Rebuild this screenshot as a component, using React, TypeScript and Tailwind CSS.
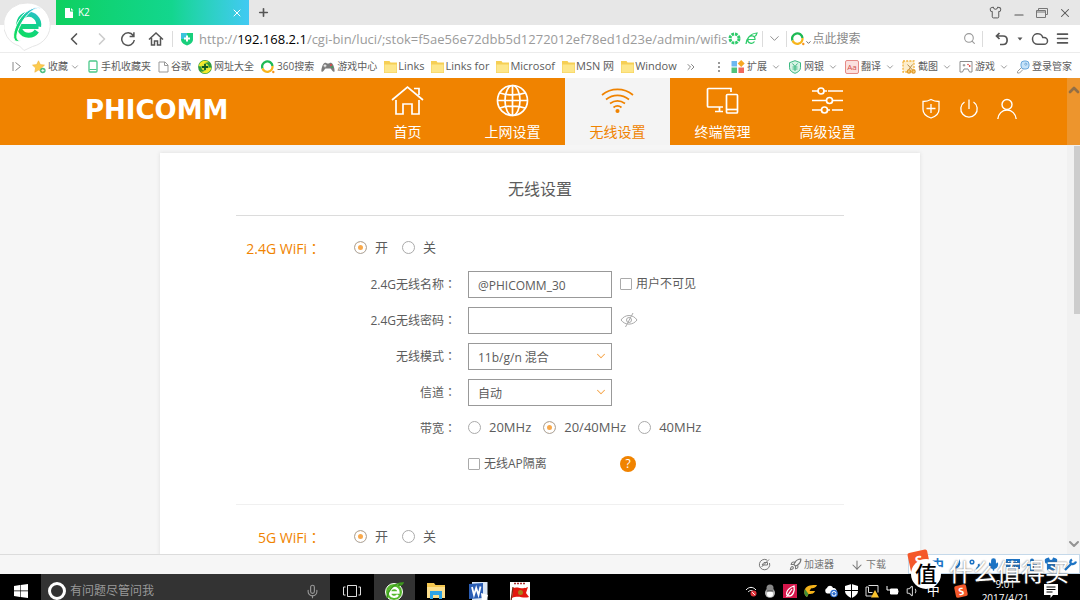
import { useState, type ReactNode } from "react";
import {
  ArrowDown,
  ChevronDown,
  ChevronLeft,
  ChevronRight,
  ChevronsRight,
  ChevronUp,
  Cloud,
  Menu,
  Mic,
  Minus,
  Plus,
  Rocket,
  Search,
  Shirt,
  Volume1,
  X,
} from "lucide-react";

export default function App() {
  return (
    <div className="h-screen flex flex-col overflow-hidden bg-white font-['Open_Sans','Noto_Sans_CJK_SC',sans-serif] text-[#5c5c5c]">
      <BrowserChrome />
      <main className="relative flex-1 min-h-0 overflow-hidden bg-[#f6f6f6]">
        <RouterHeader />
        <WifiCard />
        <ScrollBar />
      </main>
      <StatusBar />
      <Taskbar />
    </div>
  );
}

/* ---------- browser ---------- */

function BrowserChrome() {
  return (
    <div className="relative shrink-0">
      <TabStrip />
      <AddressBar />
      <BookmarkBar />
      <div className="absolute left-1 top-0.5">
        <BrowserLogo />
      </div>
    </div>
  );
}

function BrowserLogo() {
  return (
    <svg width="47" height="49" viewBox="0 0 47 49" fill="none">
      <defs>
        <linearGradient id="logo" gradientUnits="userSpaceOnUse" x1="34" y1="5" x2="20" y2="36">
          <stop offset="0" stopColor="#3fb5ee" />
          <stop offset="0.45" stopColor="#12cf96" />
          <stop offset="1" stopColor="#10dc60" />
        </linearGradient>
      </defs>
      <path
        d="M23.500 1a22.500 22 0 0 1 5 43.500L20 48.500 15.500 44A22.500 22 0 0 1 23.500 1z"
        fill="#fff"
        stroke="#e6e6e6"
      />
      <path
        d="M34.500 24.500H16M34.600 24.500a10 10.500 0 1 0-1.800 4.500"
        stroke="url(#logo)"
        strokeWidth="5"
      />
      <path
        d="M37 7c-3-3-11-1-17 5C12 20 7.500 33 10.500 38c1 1.600 3.500 1.800 6 .8-4 0-4.500-4-2.500-10C17 20 24 10 31 7c2-.8 4-.8 6 0z"
        fill="url(#logo)"
        stroke="#fff"
        strokeWidth="1"
      />
    </svg>
  );
}

function TabStrip() {
  return (
    <div className="h-[25px] flex items-stretch bg-[#e7e7e7] pl-14 pr-2 text-[#555]">
      <div className="w-[193px] flex items-center pl-2 pr-1.5 text-white text-[10px] bg-linear-to-r from-[#0fd05f] via-[#13d68e] via-60% to-[#42c9f3]">
        <svg width="10" height="12" viewBox="0 0 10 12" fill="#fff">
          <path d="M1 1h5v3.500h3V11H1z" />
          <path d="M7 1l2.500 2.500H7z" />
        </svg>
        <span className="ml-1 flex-1">K2</span>
        <button aria-label="关闭标签">
          <X size={12} strokeWidth={2} />
        </button>
      </div>
      <button aria-label="新标签" className="ml-2">
        <Plus size={13} strokeWidth={3} />
      </button>
      <div className="ml-auto flex items-center gap-2.5">
        <button aria-label="皮肤">
          <Shirt size={13} strokeWidth={1.8} />
        </button>
        <button aria-label="最小化" className="pt-1">
          <Minus size={14} strokeWidth={1.8} />
        </button>
        <button aria-label="还原">
          <svg width="12" height="12" viewBox="0 0 12 12" fill="none" stroke="#777">
            <path d="M2.500 3.500v-2h9v6h-2M.5 3.500h9v7h-9zM.5 5h9" />
          </svg>
        </button>
        <button aria-label="关闭">
          <X size={14} strokeWidth={1.8} />
        </button>
      </div>
    </div>
  );
}

function Divider() {
  return <i className="w-px h-4 bg-[#dcdcdc]" />;
}

function AddressBar() {
  return (
    <div className="h-7 flex items-center pl-16 pr-2.5 border-b border-[#ececec] bg-white text-[#555]">
      <div className="flex items-center gap-2">
        <button aria-label="后退">
          <ChevronLeft size={20} strokeWidth={2} />
        </button>
        <button aria-label="前进" className="text-[#ccc]">
          <ChevronRight size={20} strokeWidth={2} />
        </button>
        <button aria-label="刷新">
          <svg width="16" height="16" viewBox="0 0 16 16" fill="none" stroke="currentColor" strokeWidth="1.500">
            <path d="M13.200 4.500A6.300 6.300 0 1 0 14.300 9M13.900 1.200v4.300H9.600" />
          </svg>
        </button>
        <button aria-label="主页" className="ml-1">
          <svg width="16" height="16" viewBox="0 0 16 16" fill="none" stroke="currentColor" strokeWidth="1.500">
            <path d="M1 8.500L8 2l7 6.500M3.500 7v7h3v-4h3v4h3V7" />
          </svg>
        </button>
        <Divider />
      </div>
      <svg className="ml-2 shrink-0" width="12" height="14" viewBox="0 0 12 14">
        <path d="M0 1h12v6.500c0 3-3 5-6 6-3-1-6-3-6-6z" fill="#19cf7c" />
        <path d="M0 1h6v6H0z" fill="#3bc4dc" />
        <path d="M6 3.500v6M3 6.500h6" stroke="#fff" strokeWidth="2" />
      </svg>
      <div className="ml-1.5 shrink-0 whitespace-nowrap text-[13px] leading-5 text-[#9b9b9b]">
        http://<span className="text-black">192.168.2.1</span>
        /cgi-bin/luci/;stok=f5ae56e72dbb5d1272012ef78ed1d23e/admin/wifis
      </div>
      <div className="ml-px flex items-center gap-1">
        <svg width="13" height="13" viewBox="0 0 13 13" fill="none" stroke="#2fcb6b">
          <circle cx="6.500" cy="6.500" r="4.500" strokeWidth="3" strokeDasharray="2.600 0.930" />
        </svg>
        <svg width="13" height="13" viewBox="0 0 13 13" fill="none" stroke="#2fcb6b" strokeWidth="1.200">
          <path d="M2.500 7.500h7.500c.5-5-6.500-4.500-7.200 0-.5 4 5 5 6.700 2M1 12C1 7 5 1.500 12 1c-.5 2-1 3-2.500 3.500" />
        </svg>
        <Divider />
        <button aria-label="展开地址">
          <ChevronDown size={15} strokeWidth={1.500} className="text-[#888]" />
        </button>
        <Divider />
      </div>
      <label className="ml-1 flex-1 min-w-0 flex items-center">
        <RingIcon />
        <ChevronDown size={7} strokeWidth={3} className="mt-2 shrink-0" />
        <input
          aria-label="搜索"
          placeholder="点此搜索"
          className="flex-1 min-w-0 text-xs outline-none placeholder:text-[#888]"
        />
      </label>
      <div className="flex items-center">
        <button aria-label="搜索按钮" className="mr-1.5 text-[#999]">
          <Search size={13} strokeWidth={2} />
        </button>
        <Divider />
        <button aria-label="恢复" className="ml-3">
          <svg width="14" height="14" viewBox="0 0 14 14" fill="none" stroke="currentColor" strokeWidth="1.700">
            <path d="M4.500 1L1.500 4l3 3M1.500 4H8c5.500 0 5.500 8.500 0 8.500H5" />
          </svg>
        </button>
        <svg className="ml-2" width="6" height="4" viewBox="0 0 6 4" fill="currentColor">
          <path d="M.5.5h5L3 3.500z" />
        </svg>
        <button aria-label="云同步" className="ml-2">
          <Cloud size={18} strokeWidth={2} />
        </button>
        <button aria-label="菜单" className="ml-1.5">
          <Menu size={15} strokeWidth={2.500} />
        </button>
      </div>
    </div>
  );
}

function RingIcon() {
  return (
    <svg width="14" height="14" viewBox="0 0 14 14" fill="none" strokeWidth="2.300" className="shrink-0">
      <path d="M1.500 8.500a5.200 5.200 0 1 1 10-2.500" stroke="#1db954" />
      <path d="M11.500 6a5.200 5.200 0 0 1-10 2.500" stroke="#f7b51c" />
      <circle cx="12.300" cy="12" r="1.200" fill="#f7941d" stroke="none" />
    </svg>
  );
}

function FolderIcon() {
  return (
    <svg width="13" height="12" viewBox="0 0 13 12">
      <path d="M0 0h5.500l1 1.500H13V12H0z" fill="#f6cf55" />
      <path d="M.5 3.500h12v8H.5z" fill="#fde68a" />
    </svg>
  );
}

function StarIcon() {
  return (
    <svg width="14" height="14" viewBox="0 0 14 14">
      <path
        d="M6.500.8l1.800 3.800 4.200.5-3.100 2.900.8 4.200-3.700-2.100-3.700 2.100.8-4.200L.5 5.100l4.200-.5z"
        fill="#fccb4e"
        stroke="#eeb23c"
        strokeWidth="0.600"
      />
      <circle cx="10.800" cy="10.500" r="2.800" fill="#4cbf83" />
      <path d="M10.800 9v3M9.300 10.500h3" stroke="#fff" strokeWidth="0.800" />
    </svg>
  );
}

function PhoneIcon() {
  return (
    <svg width="12" height="13" viewBox="0 0 12 13" fill="none">
      <rect x="2" y="1" width="8" height="11" rx="1" stroke="#4cc98a" strokeWidth="1.300" />
      <path d="M2.500 9.500h7" stroke="#4cc98a" />
    </svg>
  );
}

function PageIcon() {
  return (
    <svg width="11" height="12" viewBox="0 0 11 12" fill="none" stroke="#999">
      <path d="M1 1h6l3 3v7H1zM6.500 1v3.500H10" />
    </svg>
  );
}

function PlusBallIcon() {
  return (
    <svg width="14" height="14" viewBox="0 0 14 14">
      <circle cx="7" cy="7" r="6.900" fill="#2f9a3c" />
      <path d="M.8 6A6.400 6.400 0 0 1 11.500 2.500C9 2 7 3 5.500 4.500S2.500 7 .8 6z" fill="#f5ea2a" />
      <path d="M13.200 8A6.400 6.400 0 0 1 2.500 11.500C5 12 7 11 8.500 9.500S11.500 7 13.200 8z" fill="#f5ea2a" />
      <circle cx="7" cy="7" r="3.600" fill="#d8e63a" />
      <path d="M7 4v6M4 7h6" stroke="#11581f" strokeWidth="1.800" />
    </svg>
  );
}

function PadIcon() {
  return (
    <svg width="14" height="12" viewBox="0 0 14 12">
      <path
        d="M3.500 2C5 1.200 5.500 2.500 7 2.500S9 1.200 10.500 2c2 1 3.500 6.500 3 8.500-1 1.500-3-2-4-3h-5c-1 1-3 4.500-4 3C0 8.500 1.500 3 3.500 2z"
        fill="#7b7b7b"
      />
      <path d="M4 3.300v3M2.500 4.800h3" stroke="#fff" strokeWidth="0.900" />
      <circle cx="10" cy="4" r="1" fill="#e0443e" />
      <circle cx="11.200" cy="6" r="0.900" fill="#3aa757" />
    </svg>
  );
}

function BlocksIcon() {
  return (
    <svg width="14" height="14" viewBox="0 0 14 14">
      <path d="M.5 1h5.500v5.500H.5z" fill="#6cb8f0" />
      <path d="M.5 7.500h5.500V13H.5z" fill="#4fc37c" />
      <path d="M7.500 7.500H13V13H7.500z" fill="#f06a5d" />
      <path d="M10.200 0L13.700 3.500l-3.500 3.500L6.700 3.500z" fill="#f7a823" />
    </svg>
  );
}

function YuanIcon() {
  return (
    <svg width="14" height="14" viewBox="0 0 14 14" fill="none" stroke="#3db982">
      <path d="M7 .7l5.500 2v5c0 3-3 4.800-5.500 5.600-2.500-.8-5.500-2.600-5.500-5.600v-5z" fill="#d7f3e5" />
      <path d="M4.500 3.500L7 6.500l2.500-3M7 6.500v4.500M4.500 7h5M4.500 9h5" />
    </svg>
  );
}

function TranslateIcon() {
  return (
    <span className="w-3.5 h-3.5 flex items-center justify-center rounded-xs border border-[#e58b87] bg-[#fbe0de] text-[#d4504a] text-[8px] leading-none">
      Aa
    </span>
  );
}

function SnipIcon() {
  return (
    <svg width="14" height="14" viewBox="0 0 14 14" fill="none">
      <rect x="1" y="1" width="11" height="11" fill="#fdeecb" stroke="#f2b33d" strokeWidth="1.300" strokeDasharray="2 1.200" />
      <path d="M5.500 4.500l5 5.500M10.500 4.500l-4 5.500" stroke="#b78d4f" />
      <circle cx="7" cy="11.500" r="1.600" stroke="#e09a26" strokeWidth="1.300" />
      <circle cx="11.500" cy="11.500" r="1.600" stroke="#e09a26" strokeWidth="1.300" />
    </svg>
  );
}

function GameIcon() {
  return (
    <svg width="14" height="13" viewBox="0 0 14 13" fill="none" stroke="#8d8d8d">
      <path d="M1 1.500h12v10.500h-2.500L9 9H5l-1.500 3H1z" />
      <path d="M5 4v2.500M3.700 5.200h2.600" />
      <circle cx="9" cy="4.500" r="0.800" fill="#e0443e" stroke="none" />
      <circle cx="10.700" cy="6" r="0.900" fill="#e0443e" stroke="none" />
    </svg>
  );
}

function KeyIcon() {
  return (
    <svg width="14" height="14" viewBox="0 0 14 14" fill="none" stroke="#6aa8dc">
      <path d="M5.500 7.500L1.500 11.500v1.500h2l3.500-3.500" stroke="#9a9a9a" />
      <rect x="5" y="1" width="8" height="8" rx="3" fill="#c5e2f8" />
      <circle cx="9.800" cy="4.200" r="1" fill="#fff" />
    </svg>
  );
}

const bookmarks: { text: string; icon: ReactNode; menu?: boolean }[] = [
  { text: "收藏", icon: <StarIcon />, menu: true },
  { text: "手机收藏夹", icon: <PhoneIcon /> },
  { text: "谷歌", icon: <PageIcon /> },
  { text: "网址大全", icon: <PlusBallIcon /> },
  { text: "360搜索", icon: <RingIcon /> },
  { text: "游戏中心", icon: <PadIcon /> },
];

const folders = ["Links", "Links for", "Microsof", "MSN 网", "Window"];

const tools = [
  { text: "扩展", icon: <BlocksIcon />, menu: true },
  { text: "网银", icon: <YuanIcon />, menu: true },
  { text: "翻译", icon: <TranslateIcon />, menu: true },
  { text: "截图", icon: <SnipIcon />, menu: true },
  { text: "游戏", icon: <GameIcon />, menu: true },
  { text: "登录管家", icon: <KeyIcon />, menu: false },
];

function BookmarkBar() {
  return (
    <div className="h-[25px] flex items-center pt-0.5 pl-3 pr-2 bg-white text-[10px] whitespace-nowrap">
      <svg width="10" height="11" viewBox="0 0 10 11" fill="none" stroke="#888">
        <path d="M1 1v9M3.500 1.500L8.500 5.500 3.500 9.500" />
      </svg>
      <div className="ml-2.5 flex gap-[7px]">
        {bookmarks.map(({ text, icon, menu }) => (
          <a key={text} href="#bookmark" className="flex items-center gap-0.5">
            {icon}
            {text}
            {menu && <ChevronDown size={10} strokeWidth={2} className="text-[#888]" />}
          </a>
        ))}
        {folders.map((text) => (
          <a key={text} href="#folder" className="flex items-center gap-px text-[11px]">
            <FolderIcon />
            {text}
          </a>
        ))}
      </div>
      <ChevronsRight size={12} strokeWidth={1.500} className="ml-2" />
      <div className="ml-auto flex items-center gap-[7px]">
        <span className="mr-1 flex flex-col gap-0.5">
          <i className="size-0.5 bg-[#999]" />
          <i className="size-0.5 bg-[#999]" />
          <i className="size-0.5 bg-[#999]" />
        </span>
        {tools.map(({ text, icon, menu }) => (
          <button key={text} className="flex items-center gap-0.5">
            {icon}
            {text}
            {menu && <ChevronDown size={10} strokeWidth={2} className="ml-0.5 text-[#888]" />}
          </button>
        ))}
      </div>
    </div>
  );
}

/* ---------- router page ---------- */

const navItems = [
  {
    text: "首页",
    icon: (
      <>
        <path d="M1 16L16.500 3 32 16M23 4.500h5V11" />
        <path d="M5 16v14h7V20h9v10h7V16" />
      </>
    ),
  },
  {
    text: "上网设置",
    icon: (
      <>
        <circle cx="16.500" cy="16.500" r="15" />
        <ellipse cx="16.500" cy="16.500" rx="7.500" ry="15" />
        <path d="M16.500 1.500v30M1.500 16.500h30M4 9c7 2.500 18 2.500 25 0M4 24c7-2.500 18-2.500 25 0" />
      </>
    ),
  },
  {
    text: "无线设置",
    icon: (
      <>
        <path d="M1 11c9-7.500 22-7.500 31 0M5 15.500c7-5.500 16-5.500 23 0M9 19.500c5-3.500 10-3.500 15 0M12.500 23.500c2.500-2 5.500-2 8 0" />
        <circle cx="16.500" cy="27" r="1.200" fill="currentColor" />
      </>
    ),
  },
  {
    text: "终端管理",
    icon: (
      <>
        <path d="M25 8V4.500H2.500a1 1 0 0 0-1 1V22a1 1 0 0 0 1 1H17M13.500 23v4M9 27.500h8" />
        <rect x="20.500" y="10.500" width="11" height="18.500" rx="1" />
        <path d="M20.500 25.500h11" />
      </>
    ),
  },
  {
    text: "高级设置",
    icon: (
      <>
        <path d="M1 7h6M13 7h3M17 7h15M1 16.500h14M22 16.500h10M1 26h9M17 26h2M21 26h11" />
        <circle cx="10" cy="7" r="3" />
        <circle cx="18.500" cy="16.500" r="3" />
        <circle cx="13.500" cy="26" r="3" />
      </>
    ),
  },
];

function RouterHeader() {
  const [active, setActive] = useState("无线设置");

  return (
    <header className="h-[67px] flex items-stretch bg-[#f08300] text-white">
      <div className="w-[355px] flex items-center pl-[85px] pb-1">
        <h1 className="font-['DejaVu_Sans',sans-serif] font-bold text-[26px] leading-8">PHICOMM</h1>
      </div>
      <nav className="flex">
        {navItems.map(({ text, icon }) => (
          <button
            key={text}
            onClick={() => setActive(text)}
            className={`w-[105px] flex flex-col items-center pt-1.5 ${
              active === text ? "bg-[#f4f4f4] text-[#f08300]" : ""
            }`}
          >
            <svg width="33" height="33" viewBox="0 0 33 33" fill="none" stroke="currentColor" strokeWidth="1.700">
              {icon}
            </svg>
            <span className="mt-[5px] text-sm leading-5">{text}</span>
          </button>
        ))}
      </nav>
      <div className="ml-auto pr-[62px] pb-1.5 flex items-center gap-4">
        <button aria-label="安全">
          <svg width="22" height="22" viewBox="0 0 22 22" fill="none" stroke="currentColor" strokeWidth="1.300">
            <path d="M11 1.500c2.500 1.500 5 2 8 2v8c0 4-3.500 7-8 8.500C6.500 18.500 3 15.500 3 11.500v-8c3 0 5.500-.5 8-2zM11 6v9M6.500 10.500h9" />
          </svg>
        </button>
        <button aria-label="重启">
          <svg width="22" height="22" viewBox="0 0 22 22" fill="none" stroke="currentColor" strokeWidth="1.300">
            <path d="M11 1.500V11M6.500 4a8.200 8.200 0 1 0 9 0" />
          </svg>
        </button>
        <button aria-label="用户">
          <svg width="22" height="22" viewBox="0 0 22 22" fill="none" stroke="currentColor" strokeWidth="1.400">
            <circle cx="11" cy="6.500" r="5" />
            <path d="M1.800 21c.5-5 4.200-9 9.200-9s8.700 4 9.200 9" />
          </svg>
        </button>
      </div>
    </header>
  );
}

function Colon() {
  return <span className="font-['Noto_Sans_CJK_TC',sans-serif]">：</span>;
}

function WifiCard() {
  return (
    <form className="max-w-[760px] mx-auto mt-2 px-[76px] bg-white text-xs shadow-[0_0_4px_#dcdcdc]">
      <h2 className="pt-6 pb-3.5 text-base leading-6 text-center border-b border-[#dcdcdc]">无线设置</h2>
      <section className="pt-3.5 pb-[22px] border-b border-[#f0f0f0]">
        <WifiSwitch label="2.4G WiFi" name="wifi24" />
        <Field label="2.4G无线名称" id="ssid">
          <TextBox id="ssid" value="@PHICOMM_30" />
          <Check label="用户不可见" />
        </Field>
        <Field label="2.4G无线密码" id="password">
          <TextBox id="password" value="" />
          <button type="button" aria-label="显示密码" className="text-[#aaa]">
            <svg width="18" height="16" viewBox="0 0 18 16" fill="none" stroke="currentColor">
              <path d="M1 8c4-6 12-6 16 0-4 5.500-12 5.500-16 0zM13 1L5.500 15" />
              <circle cx="9" cy="8" r="2.500" />
            </svg>
          </button>
        </Field>
        <Field label="无线模式" id="mode">
          <Dropdown id="mode" options={["11b/g/n 混合", "11b/g 混合"]} />
        </Field>
        <Field label="信道" id="channel">
          <Dropdown id="channel" options={["自动", "1", "6", "11"]} />
        </Field>
        <Field label="带宽">
          <div className="flex gap-3">
            <Radio name="bandwidth" label="20MHz" />
            <Radio name="bandwidth" label="20/40MHz" checked />
            <Radio name="bandwidth" label="40MHz" />
          </div>
        </Field>
        <Field>
          <div className="w-36">
            <Check label="无线AP隔离" />
          </div>
          <button
            type="button"
            aria-label="帮助"
            className="size-4 rounded-full bg-[#f08300] text-white text-xs leading-4"
          >
            ?
          </button>
        </Field>
      </section>
      <section className="pt-3.5 pb-10">
        <WifiSwitch label="5G WiFi" name="wifi5" />
      </section>
    </form>
  );
}

function WifiSwitch({ label, name }: { label: string; name: string }) {
  return (
    <div className="h-9 flex items-center">
      <h3 className="w-[85px] text-right text-sm text-[#f08300]">
        {label}
        <Colon />
      </h3>
      <div className="ml-[33px] flex gap-3.5">
        <Radio name={name} label="开" checked />
        <Radio name={name} label="关" />
      </div>
    </div>
  );
}

function Field({ label, id, children }: { label?: string; id?: string; children: ReactNode }) {
  return (
    <div className="h-9 flex items-center">
      <label htmlFor={id} className="w-[220px] text-right">
        {label}
        {label && <Colon />}
      </label>
      <div className="ml-3 flex items-center gap-2">{children}</div>
    </div>
  );
}

function TextBox({ id, value }: { id: string; value: string }) {
  return (
    <input
      id={id}
      defaultValue={value}
      className="w-36 h-[27px] pl-[9px] pt-0.5 border border-[#999] bg-white outline-none"
    />
  );
}

function Dropdown({ id, options }: { id: string; options: string[] }) {
  return (
    <div className="relative">
      <select id={id} className="w-36 h-[27px] pl-[9px] pt-1 border border-[#999] bg-white appearance-none outline-none">
        {options.map((option) => (
          <option key={option}>{option}</option>
        ))}
      </select>
      <ChevronDown
        size={14}
        strokeWidth={1.800}
        className="absolute right-1 top-1.5 text-[#f5a54a] pointer-events-none"
      />
    </div>
  );
}

function Radio({ name, label, checked }: { name: string; label: string; checked?: boolean }) {
  return (
    <label className="flex items-center gap-2 text-[13px]">
      <input
        type="radio"
        name={name}
        defaultChecked={checked}
        className="size-[13px] appearance-none rounded-full border border-[#aaa] bg-white checked:bg-[#f9a94b] checked:shadow-[inset_0_0_0_3px_#fff]"
      />
      {label}
    </label>
  );
}

function Check({ label }: { label: string }) {
  return (
    <label className="flex items-center gap-1">
      <input
        type="checkbox"
        className="size-3 appearance-none rounded-[1px] border border-[#aaa] bg-white checked:bg-[#f5a54a]"
      />
      {label}
    </label>
  );
}

function ScrollBar() {
  return (
    <div className="absolute right-0 inset-y-0 w-[13px] flex flex-col items-center bg-[#e3e3e3]/20 text-[#555]/60">
      <ChevronUp size={16} strokeWidth={4} className="mt-1 shrink-0" />
      <div className="mt-12 ml-auto w-1.5 h-[168px] bg-[#cdcdcd]" />
      <ChevronDown size={16} strokeWidth={3} className="mt-auto mb-0.5 shrink-0" />
    </div>
  );
}

/* ---------- bottom bars ---------- */

function StatusBar() {
  return (
    <footer className="relative h-5 shrink-0 flex items-center justify-end pr-[194px] bg-[#f6f6f6] border-t border-[#dcdcdc] text-[10px] text-[#777]">
      <svg width="13" height="13" viewBox="0 0 13 13" fill="none" stroke="currentColor">
        <path d="M11.500 5A5.200 5.200 0 1 1 9 2M3.500 9L11 1.500M4 7h5.500V4.500H6z" />
      </svg>
      <button className="ml-4.5 flex items-center gap-0.5">
        <Rocket size={13} strokeWidth={2} />
        加速器
      </button>
      <button className="ml-4 flex items-center gap-0.5">
        <ArrowDown size={14} strokeWidth={1.800} />
        下载
      </button>
      <ImeBar />
    </footer>
  );
}

function ImeBar() {
  return (
    <div className="absolute right-0 bottom-0 z-10 h-5 w-[172px] flex items-center justify-end gap-1.5 pr-0.5 border border-[#c5d9ea] bg-white text-[#1c73c4]">
      <span className="absolute left-0 -top-1 size-5 -rotate-12 rounded-xs bg-[#f4582a] text-white font-bold text-sm leading-5 text-center">
        S
      </span>
      <span className="text-[13px] leading-4 font-bold">中</span>
      <svg width="13" height="13" viewBox="0 0 13 13" fill="currentColor">
        <path d="M9 1c4 6-2 12-8 9.500C6 10 9.500 6 9 1z" />
      </svg>
      <svg width="12" height="13" viewBox="0 0 12 13" fill="none" stroke="currentColor" strokeWidth="1.500">
        <circle cx="3" cy="4" r="1.800" />
        <path d="M9.500 6c1 1.500 0 4-2 5" strokeWidth="2" />
      </svg>
      <Mic size={13} strokeWidth={3} fill="currentColor" />
      <svg width="14" height="12" viewBox="0 0 14 12" fill="currentColor">
        <path d="M0 1h14v10H0z" />
        <path d="M2 3.500h10M2 6h10M4 9h6" stroke="#fff" strokeDasharray="1.500 1" />
      </svg>
      <svg width="12" height="13" viewBox="0 0 12 13" fill="currentColor">
        <circle cx="6" cy="2.500" r="2" />
        <path d="M1 6h10v2H8v5H4V8H1z" />
      </svg>
      <Shirt size={14} fill="currentColor" />
      <svg width="13" height="13" viewBox="0 0 13 13" fill="none" stroke="currentColor" strokeWidth="2.300">
        <path d="M1 12l6-6M8 1.500c-3 2-1.500 5 1 4.500 1.500 0 2.500-1 3-2.500" />
      </svg>
      <div className="absolute left-0.5 top-1 flex items-center gap-2 text-white">
        <span className="size-[30px] rounded-full bg-white text-black text-[22px] leading-7 text-center font-medium">
          值
        </span>
        <span className="mb-1 text-2xl leading-6 whitespace-nowrap [text-shadow:0_0_2px_#555]">什么值得买</span>
      </div>
    </div>
  );
}

function Taskbar() {
  return (
    <div className="h-[26px] shrink-0 overflow-hidden bg-black text-white">
      <div className="h-[34px] flex items-center">
        <button aria-label="开始" className="w-[41px] flex justify-center">
          <svg width="14" height="14" viewBox="0 0 14 14" fill="#fff">
            <path d="M0 2l6-.9v5.500H0zM6.600 1L14 0v6.600H6.600zM0 7.300h6v5.600L0 12zM6.600 7.300H14V14l-7.400-1z" />
          </svg>
        </button>
        <label className="w-[289px] h-full flex items-center gap-1 pl-[7px] pr-2.5 bg-[#333] text-[#999]">
          <i className="size-[18px] shrink-0 rounded-full border-3 border-white" />
          <input
            aria-label="小娜"
            placeholder="有问题尽管问我"
            className="flex-1 min-w-0 text-xs outline-none placeholder:text-[#999]"
          />
          <Mic size={15} strokeWidth={1.800} />
        </label>
        <button aria-label="任务视图" className="w-11 flex justify-center">
          <svg width="18" height="12" viewBox="0 0 18 12" fill="none" stroke="#ddd">
            <path d="M4.500.5h9v11h-9zM2.500 2H.5v8h2M15.500 2h2v8h-2" />
          </svg>
        </button>
        <button aria-label="浏览器" className="w-[41px] h-full flex items-center justify-center bg-[#333]">
          <svg width="19" height="19" viewBox="0 0 19 19" fill="none">
            <circle cx="9" cy="10" r="8.500" fill="#55b82c" stroke="#fff" />
            <path d="M5 10.500h8.500c0-6-8.500-6-8.500 0 0 5 6 5.500 8 2.500" stroke="#fff" strokeWidth="2.300" />
            <path d="M2 16C3 8 9 1 18 1c-1 2-3 2.500-5 2.500" stroke="#3d9a1d" strokeWidth="1.500" />
          </svg>
        </button>
        <button aria-label="文件" className="w-[42px] flex justify-center">
          <svg width="18" height="16" viewBox="0 0 18 16">
            <path d="M0 0h7l1.500 2H18v13H0z" fill="#f3c64f" />
            <path d="M0 4h18v11H0z" fill="#fbdf8e" />
            <path d="M3 16V8h12v8h-3v-4H6v4z" fill="#2ea3e6" />
          </svg>
        </button>
        <button aria-label="Word" className="w-[42px] flex justify-center">
          <svg width="19" height="19" viewBox="0 0 19 19">
            <path d="M3 0h15.500v19H3z" fill="#dce8f7" />
            <path d="M0 2l14-1v15L0 17z" fill="#2a5db4" />
            <path d="M3 5l2 8 2.200-7L9.500 13l2-8.500" fill="none" stroke="#fff" strokeWidth="1.800" />
            <path d="M12 11l7 2-2 6h-4z" fill="#fff" />
          </svg>
        </button>
        <button aria-label="游戏" className="w-[42px] flex justify-center">
          <svg width="20" height="19" viewBox="0 0 20 19">
            <path d="M0 0h20v19H0z" fill="#fff" />
            <path d="M4 1.500h12" stroke="#a33" strokeWidth="1.500" strokeDasharray="2 1" />
            <path d="M3 6c5-2 9 2 15-1l-2 6 3 4c-6 2-10-2-17 1z" fill="#e3170d" />
            <path d="M3 5L1 19" stroke="#7a2b12" strokeWidth="1.300" />
            <circle cx="10.500" cy="10.500" r="2.500" fill="#a8801c" />
          </svg>
        </button>
        <Tray />
      </div>
    </div>
  );
}

function Tray() {
  return (
    <div className="ml-auto pr-[22px] flex items-center gap-[7px]">
      <svg width="12" height="12" viewBox="0 0 12 12" fill="none" stroke="#fff">
        <path d="M1 5c3-3.500 7-3.500 10 0M3 7c2-2 4-2 6 0" />
        <circle cx="8.500" cy="8.500" r="3" fill="#e2343c" stroke="none" />
        <path d="M7.200 7.200l2.600 2.600" />
      </svg>
      <svg width="12" height="14" viewBox="0 0 12 14">
        <ellipse cx="6" cy="9" rx="5" ry="4.800" fill="#bbb" />
        <circle cx="6" cy="4" r="3.500" fill="#888" />
        <ellipse cx="6" cy="10" rx="3" ry="3" fill="#fff" />
        <path d="M2.500 7h7" stroke="#444" />
      </svg>
      <svg width="14" height="14" viewBox="0 0 14 14">
        <path d="M0 0h14v14H0z" fill="#d5164b" />
        <path d="M11 2c1 5-1 10-5 10S2.500 5 11 2zM3.500 13L9 5" fill="none" stroke="#fff" strokeWidth="1.300" />
      </svg>
      <svg width="13" height="14" viewBox="0 0 13 14">
        <path d="M1 5c2-4 7-4 12-4-1 3-4 3-6 3.500L5.500 7H11c-1 3-4 3-6.500 3L3 13C0 11 0 8 1 5z" fill="#f5b21a" />
        <path d="M4.500 10L3 13C0 11 0 8 1 5z" fill="#3f8f3a" />
      </svg>
      <svg width="14" height="14" viewBox="0 0 14 14">
        <path d="M3 9.500a3 3 0 0 1 0-5.500c1-3 5-3 6 0 3 0 4 2 4 5.500z" fill="#fff" />
        <circle cx="10" cy="9.500" r="3.800" fill="#2f6fd0" />
        <path d="M8 9.500a2 2 0 0 1 4 0M12 10a2 2 0 0 1-4 0" fill="none" stroke="#fff" />
      </svg>
      <svg width="13" height="14" viewBox="0 0 13 14">
        <path d="M6.500 0L13 2v5c0 3-3 5.500-6.500 7C3 12.500 0 10 0 7V2z" fill="#fff" />
        <path d="M6.500 0v14M0 6.500h13" stroke="#000" />
      </svg>
      <svg width="14" height="14" viewBox="0 0 14 14" fill="none" stroke="#ddd">
        <path d="M3.500 1.500h9.500v7M3.500 8.500h4M1 3v9h6M1 3h2.500v5.500" />
        <path d="M10 6l4 7.500H6z" fill="#fbc32d" stroke="none" />
      </svg>
      <svg width="13" height="12" viewBox="0 0 13 12" fill="none" stroke="#fff">
        <path d="M1 1v4h3" />
        <path d="M4.500 4h7v5h-7z" fill="#fff" />
        <path d="M13 5.500v2" />
      </svg>
      <Volume1 size={14} strokeWidth={1.800} className="text-[#ccc]" />
      <span className="text-[13px]">中</span>
      <span className="ml-2 size-3 -rotate-12 rounded-xs bg-[#f4582a] text-[10px] leading-3 font-bold text-center">
        S
      </span>
      <time className="ml-2 text-[10px] leading-3.5 text-center">
        9:01
        <br />
        2017/4/21
      </time>
      <button aria-label="通知" className="ml-2">
        <svg width="14" height="15" viewBox="0 0 14 15" fill="#fff">
          <path d="M0 0h14v11h-5l-2.500 3V11H0z" />
          <path d="M2.500 3h9M2.500 5.500h9M2.500 8h6" stroke="#000" />
        </svg>
      </button>
    </div>
  );
}
